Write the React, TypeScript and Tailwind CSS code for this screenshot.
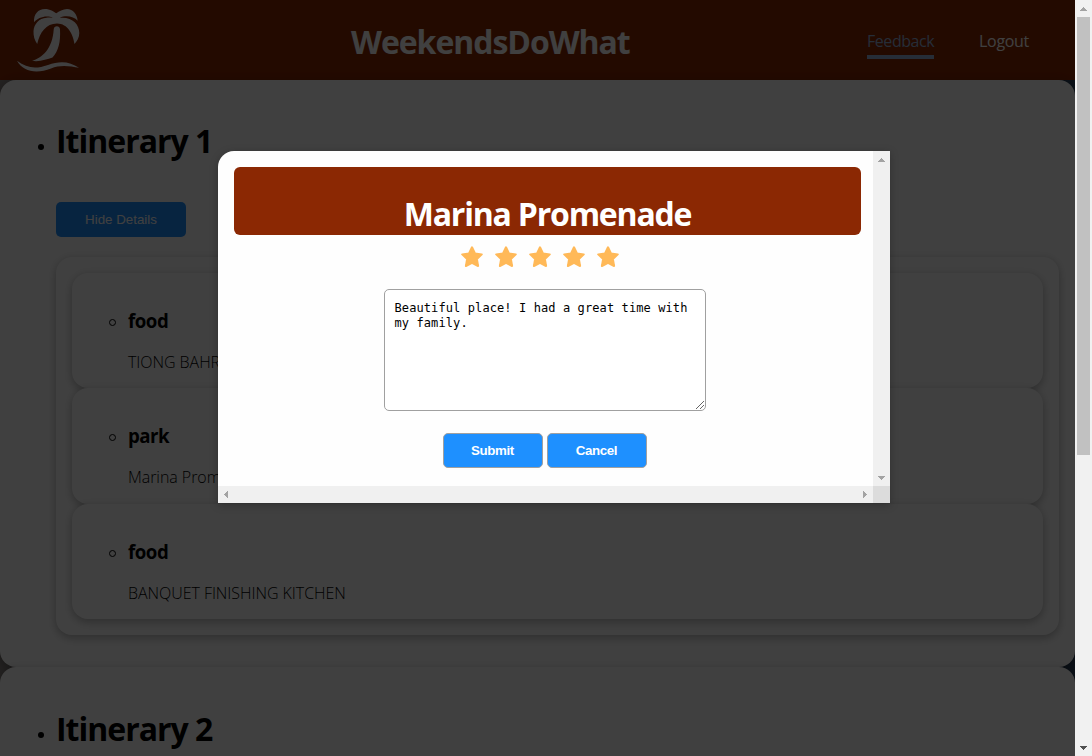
import React from "react";

const sans = "font-['Open_Sans','Noto_Sans',sans-serif]";

function Palm() {
  return (
    <svg className="ml-4 h-[66px] w-[66px] shrink-0" viewBox="16 7 66 66" fill="#fff">
      <path d="M34 22.3C33.5 14 38 9 45 8.9C50 8.9 54 11.5 56.3 13.3C59 11 63 9 67 8.9C73 9 77.3 14 77.6 20.7C74 16.5 66 14.8 59.7 17.8C72 16.6 79.3 24 79.3 33C79.3 37.5 77 41.5 74.5 44C73 34 68 23.6 57 23.4C46 23.6 40 32 37.2 44C34.5 40 33.3 36 33.5 31C34 24 39 18.2 46.5 17.7C50 17.4 52.5 17.8 53.2 17.9C47 14.8 38 17 34 22.3Z" />
      <path d="M53.7 29.5C53.9 25.3 59.9 25.3 60 29.5C60.7 42 58.5 51 52.5 57.6C47 59.3 39 62.3 32 60.8C42 58 52.5 49 53.7 29.5Z" />
      <path d="M17 60.8C27 68 35 69.5 48 65C60 60.5 70 61.5 79 67.8C70 66 60 64.5 51 68.5C37 74 23 72 17 60.8Z" />
    </svg>
  );
}

function Triangle({ points, color = "#a3a3a3" }: { points: string; color?: string }) {
  return (
    <svg className="h-[17px] w-[17px] shrink-0" viewBox="0 0 17 17" fill={color} shapeRendering="crispEdges">
      <polygon points={points} />
    </svg>
  );
}

const UP = "5,11 12,11 8.5,7";
const DOWN = "5,7 12,7 8.5,11";
const LEFT = "10,5 10,12 6,8.5";
const RIGHT = "7,5 7,12 11,8.5";

function Stop({ kind, name }: { kind: string; name: string }) {
  return (
    <li className="flex h-[115.3px] shrink-0 flex-col rounded-2xl bg-white pl-9 pt-[34px] shadow-[0_4px_8px_rgba(0,0,0,0.2),0_0_10px_rgba(0,0,0,0.1)]">
      <div className="flex h-[28px] items-center">
        <span className="ml-px mr-[13px] mt-[3px] size-[7px] rounded-full border border-black" />
        <h3 className="-ml-px text-[18.7px] leading-[28px] font-bold tracking-[-0.5px]">{kind}</h3>
      </div>
      <p className="ml-5 mt-[15px] whitespace-nowrap text-[16px] leading-6 font-light tracking-[-0.05px]">{name}</p>
    </li>
  );
}

function ItineraryTitle({ children }: { children: React.ReactNode }) {
  return (
    <div className="flex h-11 items-center">
      <span className="ml-[38px] mr-3 mt-[11px] size-[6px] rounded-full bg-black" />
      <h1 className="text-[32px] leading-[44px] font-bold tracking-[-1px]">{children}</h1>
    </div>
  );
}

const card = "rounded-2xl bg-white shadow-[0_4px_8px_rgba(0,0,0,0.2),0_0_10px_rgba(0,0,0,0.1)]";

export default function App() {
  return (
    <div className={`relative flex h-[756px] w-[1092px] overflow-hidden bg-linear-to-r from-[#8b8583] to-[#29415c] text-black ${sans}`}>
      <div className="flex w-[1075px] shrink-0 flex-col overflow-hidden">
        <header className="flex h-20 shrink-0 items-center bg-[#8b2803] text-white">
          <Palm />
          <h1 className="ml-[269px] mt-1 w-[280px] whitespace-nowrap text-[32px] font-bold tracking-[-1.05px]">WeekendsDoWhat</h1>
          <nav className="ml-[236px] flex items-start text-[16px] leading-6">
            <a className="mt-[8px] h-[30px] w-[67px] border-b-4 border-[#97b2da] text-[#97b2da] tracking-[-0.45px]">Feedback</a>
            <a className="ml-[45px] mt-[8px] tracking-[-0.3px]">Logout</a>
          </nav>
        </header>
        <section className={`h-[587px] shrink-0 pt-[39px] ${card}`}>
          <ItineraryTitle>Itinerary 1</ItineraryTitle>
          <button className="ml-14 mt-[39px] block h-[35px] w-[130px] rounded-[5px] bg-[#1e90ff] font-['Liberation_Sans',sans-serif] text-[13.33px] text-white">Hide Details</button>
          <ul className={`ml-14 mt-5 flex h-[378px] w-[1003px] flex-col p-4 ${card}`}>
            <Stop kind="food" name="TIONG BAHRU MARKET" />
            <Stop kind="park" name="Marina Promenade" />
            <Stop kind="food" name="BANQUET FINISHING KITCHEN" />
          </ul>
        </section>
        <section className={`h-[587px] shrink-0 pt-[40px] ${card}`}>
          <ItineraryTitle>Itinerary 2</ItineraryTitle>
        </section>
      </div>

      <div className="flex w-[17px] flex-col items-center justify-between bg-[#f1f1f1]">
        <div className="flex flex-col items-center">
          <Triangle points={UP} />
          <div className="h-[438px] w-[13px] bg-[#c1c1c1]" />
        </div>
        <Triangle points={DOWN} color="#505050" />
      </div>

      <div className="absolute inset-y-0 left-0 w-[1075px] bg-black/75" />

      <div className="absolute left-[218px] top-[151px] flex h-[352px] w-[672px] flex-col overflow-hidden rounded-tl-2xl bg-[#fefefe] shadow-[0_2px_8px_rgba(0,0,0,0.26)]">
        <div className="flex h-[335px]">
          <div className="flex w-[655px] flex-col items-center pr-px pt-4">
            <div className="ml-[5px] flex h-[68px] w-[627px] items-end justify-center rounded-md bg-[#8b2803]">
              <h1 className="mb-px whitespace-nowrap text-[32px] leading-10 font-bold tracking-[-1.2px] text-white">Marina Promenade</h1>
            </div>
            <div className="mr-[10px] mt-[10px] flex h-6 gap-[10px]">
              {[1, 2, 3, 4, 5].map((n) => (
                <svg key={n} className="size-6" viewBox="0 0 24 24" fill="#ffb958" stroke="#ffb958" strokeWidth="2" strokeLinejoin="round">
                  <path d="M12 2.3L15 8.5L21.8 9.4L16.9 14.1L18.1 21L12 17.9L5.9 21L7.1 14.1L2.2 9.4L9 8.5Z" />
                </svg>
              ))}
            </div>
            <div className="relative mr-px mt-5 h-[122px] w-[322px]">
              <textarea
                readOnly
                className="block h-full w-full resize-none overflow-hidden rounded-[5px] border border-[#a0a0a0] bg-white p-[10px] pt-[11px] font-['DejaVu_Sans_Mono',monospace] text-[12px] leading-[15px] tracking-[0.1px] outline-none"
                value="Beautiful place! I had a great time with my family."
              />
              <svg className="absolute bottom-[2px] right-[2px] size-[8px]" viewBox="0 0 8 8" stroke="#555" strokeWidth="0.9">
                <path d="M0 8L8 0M4 8L8 4" />
              </svg>
            </div>
            <div className="mr-px mt-[22px] flex gap-1 font-['Liberation_Sans',sans-serif] text-[13.33px] font-bold tracking-[-0.4px] text-white">
              <button className="h-[35px] w-[100px] rounded-[5px] border border-[#a0a0a0] bg-[#1e90ff]">Submit</button>
              <button className="h-[35px] w-[100px] rounded-[5px] border border-[#a0a0a0] bg-[#1e90ff]">Cancel</button>
            </div>
          </div>
          <div className="flex w-[17px] flex-col justify-between bg-[#f0f0f0]">
            <Triangle points={UP} />
            <Triangle points={DOWN} />
          </div>
        </div>
        <div className="flex h-[17px] bg-[#f0f0f0]">
          <div className="flex w-[655px] justify-between">
            <Triangle points={LEFT} />
            <Triangle points={RIGHT} />
          </div>
          <div className="h-[17px] w-[17px] bg-[#dcdcdc]" />
        </div>
      </div>
    </div>
  );
}
